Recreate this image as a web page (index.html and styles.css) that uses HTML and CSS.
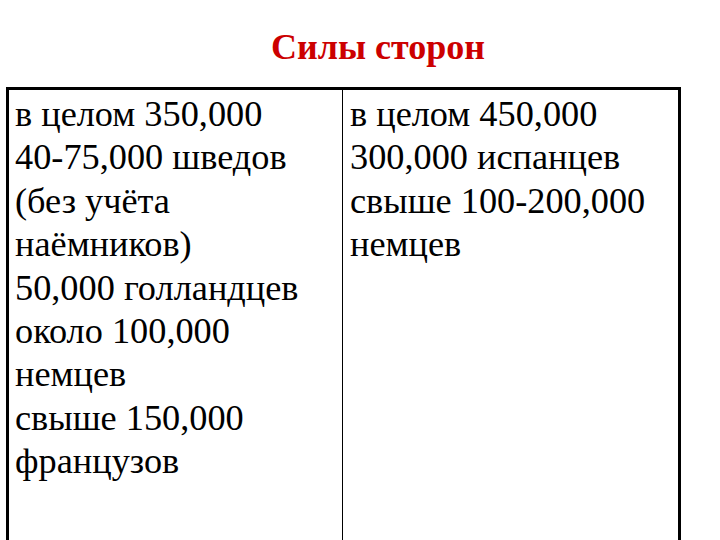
FILE: index.html
```html
<!DOCTYPE html>
<html>
<head>
<meta charset="utf-8">
<link rel="stylesheet" href="styles.css">
</head>
<body>
<h1 class="title">Силы сторон</h1>
<div class="table">
  <div class="cell left">в целом 350,000<br>40-75,000 шведов<br>(без учёта<br>наёмников)<br>50,000 голландцев<br>около 100,000<br>немцев<br>свыше 150,000<br>французов</div>
  <div class="cell right">в целом 450,000<br>300,000 испанцев<br>свыше 100-200,000<br>немцев</div>
</div>
</body>
</html>
```
FILE: styles.css
```css
html, body {
  margin: 0;
  padding: 0;
  background: #fff;
  width: 720px;
  height: 540px;
  overflow: hidden;
}
.title {
  margin: 0;
  padding: 27px 0 0 36px;
  height: 60px;
  box-sizing: border-box;
  text-align: center;
  font-family: "Liberation Serif", serif;
  font-weight: bold;
  font-size: 36px;
  line-height: 40px;
  color: #cc0000;
}
.table {
  margin-left: 6px;
  margin-top: 27px;
  width: 675px;
  height: 453px;
  border: 3px solid #000;
  border-bottom: none;
  display: flex;
  box-sizing: border-box;
}
.cell {
  font-family: "Liberation Serif", serif;
  font-size: 36.3px;
  line-height: 43.4px;
  color: #000;
  padding: 3px 0 0 6px;
  box-sizing: border-box;
}
.left {
  width: 334px;
  border-right: 1px solid #000;
}
.right {
  flex: 1;
  padding-left: 7px;
}
```
